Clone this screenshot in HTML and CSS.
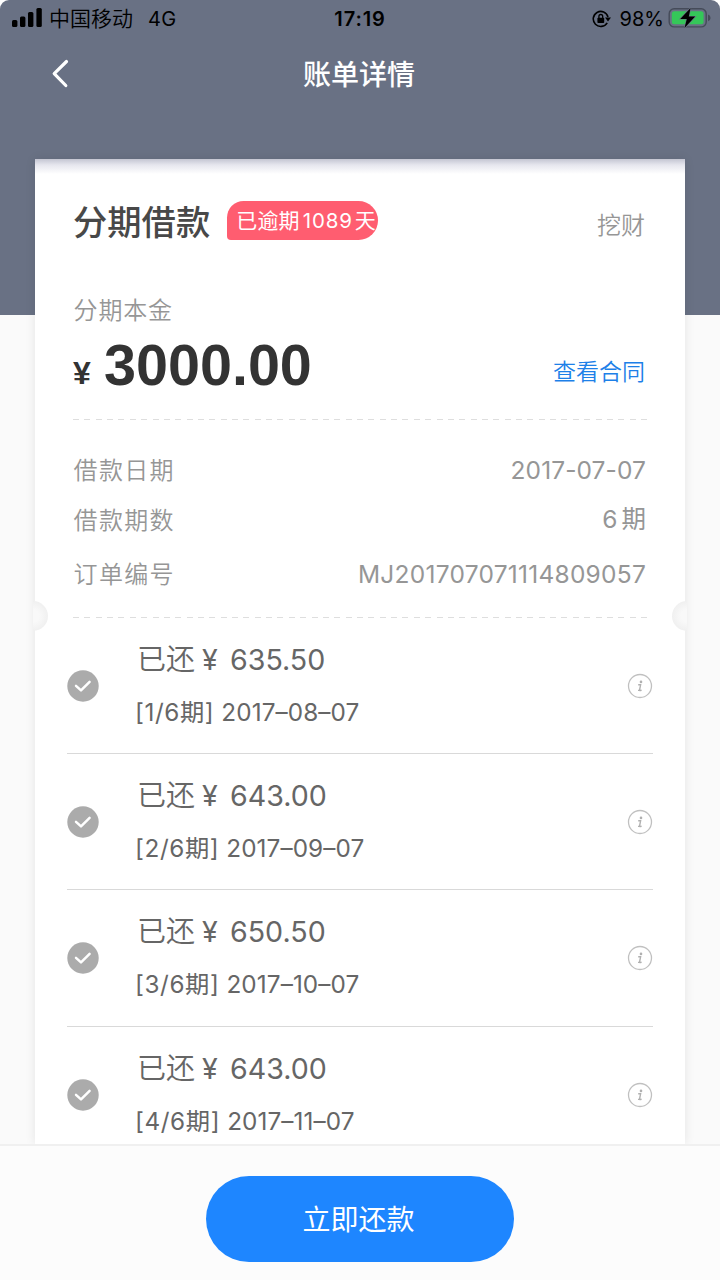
FILE: index.html
```html
<!DOCTYPE html>
<html lang="zh-CN">
<head>
<meta charset="utf-8">
<title>账单详情</title>
<link rel="stylesheet" href="styles.css">
</head>
<body>
<svg class="defs" aria-hidden="true">
  <symbol id="check" viewBox="0 0 32 32"><circle cx="16" cy="16" r="15.7" fill="#ababab"/><path d="M9 15.8l5 4.6 8.6-8.6" fill="none" stroke="#fff" stroke-width="2.5" stroke-linecap="round" stroke-linejoin="round"/></symbol>
  <symbol id="info" viewBox="0 0 26 26"><circle cx="13" cy="13" r="11.5" fill="none" stroke="#c0c0c0" stroke-width="1.3"/><circle cx="14" cy="8.9" r="1.3" fill="#b0b0b0"/><path d="M11.2 11.8h2.4l-1 5.1q-.1.7.7.6l1.3-.3M11 17.4h2" fill="none" stroke="#b0b0b0" stroke-width="1.4"/></symbol>
</svg>
<div class="screen">
  <div class="status">
    <svg class="signal" width="31" height="20" viewBox="0 0 31 20"><rect x="0" y="12" width="5.4" height="7" rx="1.5"/><rect x="8" y="8.6" width="5.4" height="10.4" rx="1.5"/><rect x="16" y="4" width="5.4" height="15" rx="1.5"/><rect x="24.4" y="0" width="5.4" height="19" rx="1.5"/></svg>
    <span class="carrier">中国移动</span><span class="network">4G</span>
    <span class="clock">17:19</span>
    <svg class="lock" width="19" height="18" viewBox="0 0 19 18"><path d="M15.2 12.8A7.5 7.5 0 1 1 16 7" fill="none" stroke="#000" stroke-width="1.6"/><path d="M13 7.5h6l-3 4z"/><rect x="5.4" y="7.8" width="6.8" height="5.2" rx=".8"/><path d="M6.9 8V6.4a1.9 1.9 0 0 1 3.8 0V8" fill="none" stroke="#000" stroke-width="1.3"/></svg>
    <span class="percent">98%</span>
    <svg class="battery" width="44" height="22" viewBox="0 0 44 22"><rect x="1.2" y="1.7" width="37" height="18.2" rx="5" fill="none" stroke="#454b59" stroke-width="1.4"/><path d="M40 7.6q2.6 1 2.6 3.3T40 14.2z" fill="#454b59"/><rect x="3.8" y="4.3" width="31.8" height="13" rx="2.5" fill="#35c759"/><path d="M22.6 1L12.2 12h6.6L16.5 21 27.2 9.6h-6.4z" stroke="#697184" stroke-width="1.2" paint-order="stroke"/></svg>
  </div>
  <div class="nav">
    <svg class="back" width="20" height="32" viewBox="0 0 20 32"><path d="M16.5 4.5L4.2 16.6l11.6 11.9" fill="none" stroke="#fff" stroke-width="3.2" stroke-linecap="round" stroke-linejoin="round"/></svg>
    <h1 class="page-title">账单详情</h1>
  </div>
  <main class="card">
    <div class="summary">
      <div class="heading">
        <h2 class="product">分期借款</h2>
        <span class="overdue">已逾期<span class="days">1089</span>天</span>
        <span class="lender">挖财</span>
      </div>
      <div class="label principal-label">分期本金</div>
      <div class="principal">
        <span class="yen">¥</span><span class="amount">3000.00</span>
        <a class="contract">查看合同</a>
      </div>
      <div class="dash"></div>
      <div class="facts">
        <div class="fact"><span class="label">借款日期</span><span class="value date">2017-07-07</span></div>
        <div class="fact"><span class="label">借款期数</span><span class="value terms">6<span class="unit">期</span></span></div>
        <div class="fact order"><span class="label">订单编号</span><span class="value serial">MJ201707071114809057</span></div>
      </div>
      <div class="dash"></div>
      <i class="notch left"></i><i class="notch right"></i>
    </div>
    <div class="list">
      <div class="item"><svg class="check"><use href="#check"/></svg><div class="detail"><div class="paid"><span class="word">已还</span><span class="cur">¥</span><span>635.50</span></div><div class="due"><span class="term">[1/6期]</span><span class="when">2017–08–07</span></div></div><svg class="info"><use href="#info"/></svg></div>
      <div class="item"><svg class="check"><use href="#check"/></svg><div class="detail"><div class="paid"><span class="word">已还</span><span class="cur">¥</span><span>643.00</span></div><div class="due"><span class="term">[2/6期]</span><span class="when">2017–09–07</span></div></div><svg class="info"><use href="#info"/></svg></div>
      <div class="item"><svg class="check"><use href="#check"/></svg><div class="detail"><div class="paid"><span class="word">已还</span><span class="cur">¥</span><span>650.50</span></div><div class="due"><span class="term">[3/6期]</span><span class="when">2017–10–07</span></div></div><svg class="info"><use href="#info"/></svg></div>
      <div class="item"><svg class="check"><use href="#check"/></svg><div class="detail"><div class="paid"><span class="word">已还</span><span class="cur">¥</span><span>643.00</span></div><div class="due"><span class="term">[4/6期]</span><span class="when">2017–11–07</span></div></div><svg class="info"><use href="#info"/></svg></div>
    </div>
  </main>
  <footer class="footer"><button class="pay">立即还款</button></footer>
</div>
</body>
</html>
```

FILE: styles.css
```css
* { box-sizing: border-box; }
body { margin: 0; background: #fff; font-family: Inter, "Noto Sans CJK SC", sans-serif; }
.defs { position: absolute; width: 0; height: 0; }
.screen {
  width: 720px; height: 1280px; overflow: hidden;
  display: flex; flex-direction: column;
  border-radius: 9px 9px 0 0;
  background: linear-gradient(#697184 315px, #fafafa 315px);
}
svg { display: block; flex: none; }

.status { position: relative; height: 37px; flex: none; display: flex; align-items: center; padding: 0 8px 0 12px; font-size: 20px; color: #000; }
.signal { margin-top: -2px; }
.carrier { margin: -3px 0 0 6px; font-size: 21px; font-weight: 350; }
.network { margin-left: 15px; letter-spacing: .4px; font-weight: 380; }
.clock { position: absolute; left: 0; right: 0; text-align: center; font-weight: 600; letter-spacing: .9px; }
.lock { margin-left: auto; }
.percent { margin-left: 9px; font-weight: 380; }
.battery { margin-left: 4px; margin-top: -2px; }

.nav { position: relative; height: 73px; flex: none; display: flex; align-items: center; justify-content: center; padding: 2px 2px 0 0; }
.back { position: absolute; left: 50px; top: 20px; }
.page-title { margin: 0; font-size: 28px; line-height: 40px; font-weight: 500; color: #fff; }

.card { margin: 49px 35px 0; height: 985px; flex: none; background: linear-gradient(#c4c5d2 0, #e6e6ee 6px, #fff 15px); box-shadow: 0 0 10px rgba(0,0,0,.09); }
.summary { position: relative; height: 459px; padding: 0 38px; }
.heading { height: 126px; display: flex; align-items: center; padding-right: 2px; }
.product { margin: 1px 0 0 0; font-size: 34.3px; font-weight: 500; color: #484848; line-height: 50px; }
.overdue { margin: -3px 0 0 17px; width: 151px; height: 39px; padding-left: 9px; border-radius: 17px 20px 20px 4px; background: #ff5d70; color: #fff; font-size: 21px; font-weight: 370; line-height: 39px; white-space: nowrap; letter-spacing: .2px; }
.days { margin: 0 2px 0 3px; letter-spacing: .8px; font-size: 20.5px; }
.lender { margin-left: auto; margin-top: 2px; color: #969696; font-size: 24px; font-weight: 350; }
.label { font-size: 24px; letter-spacing: 1.3px; color: #969696; line-height: 50px; font-weight: 350; padding: 1px 0 0 .6px; }
.principal-label { height: 50px; letter-spacing: .8px; }
.principal { height: 84px; display: flex; align-items: flex-start; color: #333; font-weight: 700; padding-right: 2px; }
.yen { width: 31px; font-size: 32px; font-family: "Liberation Sans", sans-serif; line-height: 36px; padding-top: 20px; }
.amount { font: 700 57.5px/64px "Liberation Sans", sans-serif; margin-top: -2px; }
.contract { margin-left: auto; color: #1d80e8; font-size: 23px; line-height: 34px; font-weight: 350; padding-top: 20px; }
.dash { height: 1px; width: 574px; background: repeating-linear-gradient(90deg, #dedede 0 6px, transparent 6px 11.36px); }
.facts { height: 197px; padding-top: 25px; }
.fact { height: 50px; display: flex; justify-content: space-between; align-items: center; padding-right: 1px; }
.fact.order { margin-top: 4px; }
.value { font-size: 24.5px; color: #969696; white-space: nowrap; font-weight: 380; line-height: 50px; }
.date { letter-spacing: .1px; }
.serial { letter-spacing: .25px; }
.unit { margin-left: 4px; }
.terms { height: 50px; line-height: 49px; }
.notch { position: absolute; top: 442px; width: 15px; height: 30px; }
.notch.left { left: -2px; border-radius: 0 15px 15px 0; background: radial-gradient(circle at 0 50%, #f9f9f9 6px, #f0f0f0 15px); }
.notch.right { right: -2px; border-radius: 15px 0 0 15px; background: radial-gradient(circle at 100% 50%, #f9f9f9 6px, #f0f0f0 15px); }

.list { padding: 0 32px; height: 526px; overflow: hidden; }
.item { height: 136.2px; display: flex; align-items: center; border-bottom: 1px solid #d9d9d9; padding-top: 1px; }
.check { width: 32px; height: 32px; }
.detail { margin-left: 37px; flex: 1; color: #666; }
.paid { display: flex; font-size: 28.6px; line-height: 53px; padding-left: 1px; font-weight: 380; }
.word { width: 65px; font-size: 29px; font-weight: 350; }
.cur { width: 28px; }
.due { display: flex; gap: 7px; font-size: 24.3px; line-height: 53px; font-weight: 380; letter-spacing: .1px; margin-left: -1px; }
.term { letter-spacing: .6px; }
.info { width: 26px; height: 26px; }

.footer { flex: none; height: 136px; padding-top: 30px; display: flex; justify-content: center; align-items: flex-start; background: #fcfcfc; border-top: 2px solid #f0f0f0; }
.pay { width: 308px; height: 86px; padding: 2px 3px 0 0; border: 0; border-radius: 43px; background: #1e86ff; color: #fff; font: 400 28px/40px Inter, "Noto Sans CJK SC", sans-serif; }
```
